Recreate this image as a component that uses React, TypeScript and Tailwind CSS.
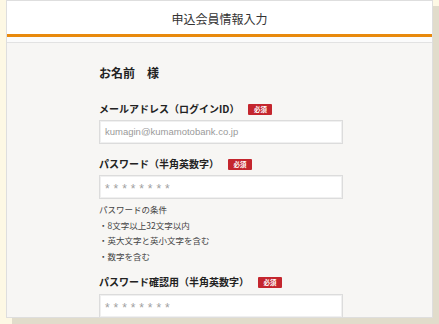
import React from "react";

const jp = { fontFamily: '"Noto Sans CJK JP", "Noto Sans", sans-serif' };

function Badge() {
  return (
    <span className="ml-[9px] inline-flex h-[11px] w-[24px] items-center justify-center rounded-[1px] bg-[#c4262e] text-[6.5px] font-bold leading-none text-white">
      必須
    </span>
  );
}

function Label({ text }: { text: string }) {
  return (
    <div className="flex h-[16px] items-center">
      <span className="text-[10px] font-bold leading-[16px] text-[#222]">{text}</span>
      <Badge />
    </div>
  );
}

function Input({ children }: { children: React.ReactNode }) {
  return (
    <div className="flex h-[24px] w-[244px] items-center border border-[#dcdcdc] bg-white pl-[5px] shadow-[inset_0_0_0_1px_#f0f0f0]">
      {children}
    </div>
  );
}

function Stars() {
  return (
    <span
      className="pt-[4px] text-[12px] leading-none tracking-[3.9px] text-[#a0a0a0]"
      style={{ fontFamily: '"Liberation Sans", sans-serif' }}
    >
      ********
    </span>
  );
}

export default function App() {
  return (
    <div className="h-[324px] w-[439px] overflow-hidden bg-[#fdf8e4]" style={jp}>
      <div className="ml-[6px] h-[318px] w-[427px] overflow-hidden border border-[#dedede] bg-[#f7f6f4] shadow-[6px_6px_0_#e1dccb]">
        <div className="flex h-[33px] items-center justify-center bg-white">
          <span className="pt-[2px] text-[12px] leading-none text-[#333]">申込会員情報入力</span>
        </div>
        <div className="h-[3px] bg-[#e8890c]" />
        <div className="h-[5px] bg-[#fbfbfb]" />
        <div className="h-[1px] bg-[#e2e2e2]" />
        <div className="pl-[92px] pt-[21px]">
          <div className="h-[18px] text-[12px] font-bold leading-[18px] text-[#222]">お名前　様</div>
          <div className="mt-[19px]">
            <Label text="メールアドレス（ログインID）" />
          </div>
          <div className="mt-[3px]">
            <Input>
              <span
                className="text-[9.5px] leading-none text-[#9a9a9a]"
                style={{ fontFamily: '"Liberation Sans", sans-serif' }}
              >
                kumagin@kumamotobank.co.jp
              </span>
            </Input>
          </div>
          <div className="mt-[12px]">
            <Label text="パスワード（半角英数字）" />
          </div>
          <div className="mt-[3px]">
            <Input>
              <Stars />
            </Input>
          </div>
          <div className="mt-[3px] text-[8.5px] leading-[15.5px] text-[#444]">
            <div>パスワードの条件</div>
            <div>・8文字以上32文字以内</div>
            <div>・英大文字と英小文字を含む</div>
            <div>・数字を含む</div>
          </div>
          <div className="mt-[10px]">
            <Label text="パスワード確認用（半角英数字）" />
          </div>
          <div className="mt-[4px]">
            <Input>
              <Stars />
            </Input>
          </div>
        </div>
      </div>
    </div>
  );
}
